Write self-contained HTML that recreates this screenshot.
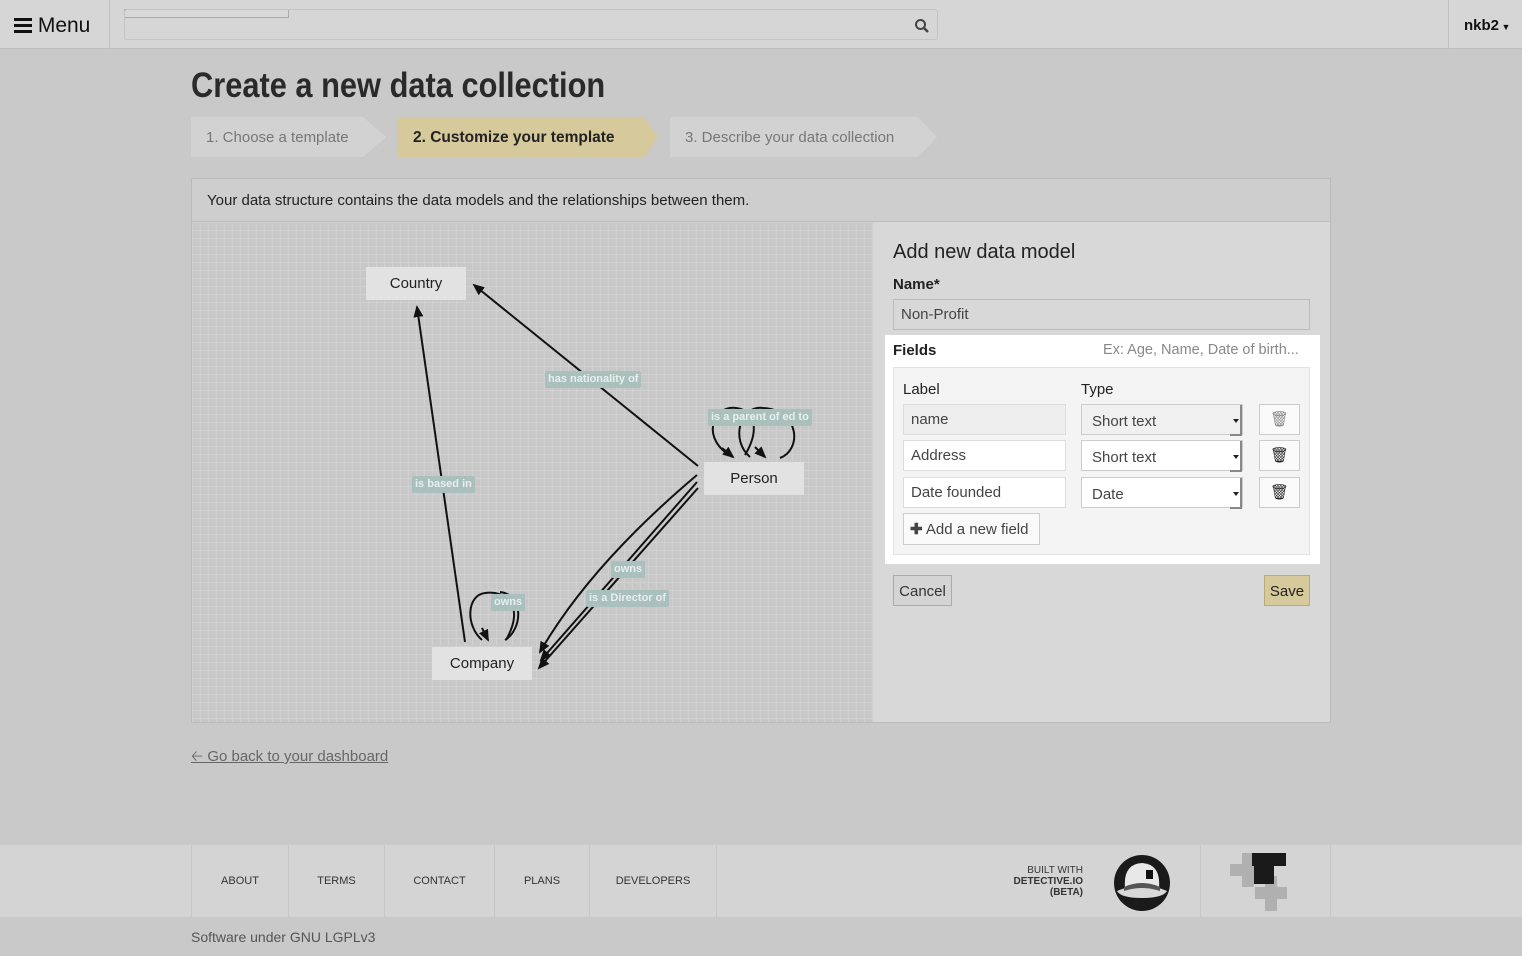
<!DOCTYPE html>
<html><head><meta charset="utf-8"><style>
*{box-sizing:border-box;margin:0;padding:0}
body{width:1522px;height:956px;background:#c9c9c9;font-family:"Liberation Sans",sans-serif;color:#222;position:relative;overflow:hidden;font-size:15px}
.abs{position:absolute}
.hdr{left:0;top:0;width:1522px;height:49px;background:#d6d6d6;border-bottom:1px solid #bdbdbd}
.tab{height:40px;top:118px;line-height:40px;font-size:15px;padding-left:15px}
.inp{border:1px solid #bbb;background:#fff;height:31px;line-height:29px;padding-left:7px;font-size:15px;color:#444;position:absolute}
.sel{border:1px solid #ccc;background:#fff;height:31px;line-height:33px;padding-left:10px;font-size:15px;color:#444;position:absolute;width:162px}
.sel:after{content:"";position:absolute;right:0;top:0;width:10px;height:29px;border-right:2px solid #888;border-bottom:2px solid #888}
.sel i{position:absolute;right:3px;top:14px;border:3px solid transparent;border-top:4px solid #222}
.trash{position:absolute;width:41px;height:31px;border:1px solid #ccc;background:#fafafa;text-align:center;line-height:29px}
.node{background:#e2e2e2;font-size:15px;text-align:center;line-height:33px;height:33px;position:absolute}
.lbl{background:#a9c0bc;color:#e8efee;font-size:11px;font-weight:bold;padding:0 3px;height:17px;line-height:17px;position:absolute;border-radius:2px}
.fl{position:absolute;top:845px;height:72px;line-height:72px;font-size:11px;color:#333;text-align:center;border-right:1px solid #c6c6c6}
</style></head><body>
<div class="abs hdr"></div>
<div class="abs" style="left:109px;top:0;width:1px;height:49px;background:#c2c2c2"></div>
<div class="abs" style="left:14px;top:14px;font-size:21px;color:#111"><svg width="18" height="16" style="vertical-align:-1px"><rect y="1" width="18" height="3" fill="#111"/><rect y="7" width="18" height="3" fill="#111"/><rect y="13" width="18" height="3" fill="#111"/></svg> Menu</div>
<div class="abs" style="left:124px;top:9px;width:165px;height:9px;border:1px solid #aaa;background:#d8d8d8"></div>
<div class="abs" style="left:124px;top:9px;width:814px;height:31px;border:1px solid #c4c4c4;border-radius:3px"></div>
<svg class="abs" style="left:914px;top:18px" width="16" height="16" viewBox="0 0 16 16"><circle cx="6.5" cy="6.5" r="4.5" fill="none" stroke="#444" stroke-width="2"/><path d="M10 10l4 4" stroke="#444" stroke-width="2.5"/></svg>
<div class="abs" style="left:1448px;top:0;width:1px;height:49px;background:#c2c2c2"></div>
<div class="abs" style="left:1464px;top:17px;font-weight:bold;font-size:15px;color:#111">nkb2<span style="font-size:9px"> ▼</span></div>

<div class="abs" style="left:191px;top:66px;font-size:35px;font-weight:bold;color:#2a2a2a;transform:scaleX(0.88);transform-origin:0 0;white-space:nowrap">Create a new data collection</div>

<svg class="abs" style="left:191px;top:117px" width="750" height="40">
<polygon points="0,0 172,0 195,20 172,40 0,40" fill="#d2d2d2"/>
<polygon points="207,0 453,0 467,20 453,40 207,40" fill="#d6c99b"/>
<polygon points="479,0 727,0 746,20 727,40 479,40" fill="#d2d2d2"/>
</svg>
<div class="abs tab" style="left:191px;color:#777">1. Choose a template</div>
<div class="abs tab" style="left:398px;font-weight:bold;color:#222;font-size:15.5px">2. Customize your template</div>
<div class="abs tab" style="left:670px;color:#777">3. Describe your data collection</div>

<div class="abs" style="left:191px;top:178px;width:1140px;height:545px;border:1px solid #bbb;background:#cecece"></div>
<div class="abs" style="left:207px;top:192px;font-size:15px;color:#222">Your data structure contains the data models and the relationships between them.</div>
<div class="abs" style="left:192px;top:221px;width:1138px;height:1px;background:#bdbdbd"></div>
<div class="abs" style="left:192px;top:222px;width:681px;height:500px;background-color:#c8c8c8;background-image:linear-gradient(#d0d0d0 1px,transparent 1px),linear-gradient(90deg,#d0d0d0 1px,transparent 1px);background-size:8px 8px"></div>
<div class="abs" style="left:873px;top:222px;width:457px;height:500px;background:#d8d8d8"></div>

<svg class="abs" style="left:192px;top:222px" width="681" height="500" viewBox="192 222 681 500">
<defs><marker id="a" markerWidth="12" markerHeight="10" refX="10" refY="5" orient="auto" markerUnits="userSpaceOnUse"><path d="M0,0L12,5L0,10z" fill="#111"/></marker></defs>
<g stroke="#111" stroke-width="2" fill="none">
<path d="M465 642 L417 307" marker-end="url(#a)"/>
<path d="M698 466 L474 285" marker-end="url(#a)"/>
<path d="M697 475 C620 540 570 600 540 652" marker-end="url(#a)"/>
<path d="M697 482 L541 660" marker-end="url(#a)"/>
<path d="M698 488 L539 668" marker-end="url(#a)"/>
<path d="M482 640 C465 625 467 595 485 593 C505 590 526 605 506 640"/>
<path d="M482 628 L488 640" marker-end="url(#a)"/>
<path d="M505 640 C522 630 525 595 500 592"/>
<path d="M733 457 C700 440 712 405 736 408 C755 410 760 430 745 455"/>
<path d="M722 448 L733 457" marker-end="url(#a)"/>
<path d="M750 457 C730 440 740 405 763 408 C800 410 802 450 780 458"/>
<path d="M755 447 L765 457" marker-end="url(#a)"/>
</g>
</svg>
<div class="node" style="left:366px;top:267px;width:100px">Country</div>
<div class="node" style="left:704px;top:462px;width:100px">Person</div>
<div class="node" style="left:432px;top:647px;width:100px">Company</div>
<div class="lbl" style="left:545px;top:371px">has nationality of</div>
<div class="lbl" style="left:708px;top:409px">is a parent of ed to</div>
<div class="lbl" style="left:412px;top:476px">is based in</div>
<div class="lbl" style="left:611px;top:561px">owns</div>
<div class="lbl" style="left:491px;top:594px">owns</div>
<div class="lbl" style="left:586px;top:590px">is a Director of</div>

<div class="abs" style="left:893px;top:241px;font-size:20px;color:#222">Add new data model</div>
<div class="abs" style="left:893px;top:276px;font-size:15px;font-weight:bold;color:#222">Name*</div>
<div class="inp" style="left:893px;top:299px;width:417px;background:#d8d8d8;border-color:#bbb">Non-Profit</div>

<div class="abs" style="left:885px;top:335px;width:435px;height:229px;background:#fff"></div>
<div class="abs" style="left:893px;top:342px;font-weight:bold;font-size:15px">Fields</div>
<div class="abs" style="left:1103px;top:342px;font-size:14.5px;color:#888">Ex: Age, Name, Date of birth...</div>
<div class="abs" style="left:893px;top:367px;width:417px;height:188px;background:#f4f4f4;border:1px solid #e2e2e2"></div>
<div class="abs" style="left:903px;top:381px;font-size:15px">Label</div>
<div class="abs" style="left:1081px;top:381px;font-size:15px">Type</div>
<div class="inp" style="left:903px;top:404px;width:163px;background:#eee;border-color:#ddd">name</div>
<div class="inp" style="left:903px;top:440px;width:163px;border-color:#ddd">Address</div>
<div class="inp" style="left:903px;top:477px;width:163px;border-color:#ddd">Date founded</div>
<div class="sel" style="left:1081px;top:404px;background:#f0f0f0">Short text<i></i></div>
<div class="sel" style="left:1081px;top:440px">Short text<i></i></div>
<div class="sel" style="left:1081px;top:477px">Date<i></i></div>
<div class="trash" style="left:1259px;top:404px;color:#888">&#128465;</div>
<div class="trash" style="left:1259px;top:440px;color:#222">&#128465;</div>
<div class="trash" style="left:1259px;top:477px;color:#222">&#128465;</div>
<div class="abs" style="left:903px;top:513px;width:137px;height:32px;border:1px solid #ccc;background:#fafafa;line-height:32px;padding-left:6px;font-size:15px;color:#444"><b style="color:#444">✚</b> Add a new field</div>

<div class="abs" style="left:893px;top:575px;width:59px;height:31px;border:1px solid #aaa;background:#d4d4d4;line-height:31px;text-align:center;font-size:15px;color:#333">Cancel</div>
<div class="abs" style="left:1264px;top:575px;width:46px;height:31px;border:1px solid #b8ab7a;background:#d6c99b;line-height:31px;text-align:center;font-size:15px;color:#222">Save</div>

<div class="abs" style="left:191px;top:746px;font-size:15px;color:#666;text-decoration:underline">&#129120; Go back to your dashboard</div>

<div class="abs" style="left:0;top:845px;width:1522px;height:72px;background:#d4d4d4"></div>
<div class="abs" style="left:191px;top:845px;width:1px;height:72px;background:#c6c6c6"></div>
<div class="fl" style="left:192px;width:97px">ABOUT</div>
<div class="fl" style="left:289px;width:96px">TERMS</div>
<div class="fl" style="left:385px;width:110px">CONTACT</div>
<div class="fl" style="left:495px;width:95px">PLANS</div>
<div class="fl" style="left:590px;width:127px">DEVELOPERS</div>
<div class="abs" style="left:990px;top:865px;width:93px;text-align:right;font-size:10px;line-height:11px;color:#333">BUILT WITH<br><b>DETECTIVE.IO<br>(BETA)</b></div>
<svg class="abs" style="left:1113px;top:854px" width="58" height="58" viewBox="0 0 58 58"><circle cx="29" cy="29" r="28" fill="#1a1a1a"/><path d="M12 34 Q10 10 29 9 Q48 10 46 34z" fill="#e8e8e8"/><path d="M4 37 Q29 26 54 37 Q50 44 29 44 Q8 44 4 37z" fill="#d8d8d8"/><path d="M11 33 Q29 25 47 33 L47 37 Q29 31 11 37z" fill="#555"/><rect x="33" y="16" width="7" height="9" fill="#111"/></svg>
<div class="abs" style="left:1200px;top:845px;width:1px;height:72px;background:#c6c6c6"></div>
<div class="abs" style="left:1330px;top:845px;width:1px;height:72px;background:#c6c6c6"></div>
<svg class="abs" style="left:1230px;top:853px" width="72" height="60">
<path d="M12 0h12v11h8v12h-8v11h-12v-11h-12v-12h12z" fill="#b0b0b0"/>
<path d="M35 23h12v11h10v12h-10v12h-12v-12h-10v-12h10z" fill="#b0b0b0"/>
<path d="M22 0h34v13h-12v18h-20v-18h-2z" fill="#1a1a1a"/></svg>
<div class="abs" style="left:191px;top:929px;font-size:14px;color:#555">Software under GNU LGPLv3</div>
</body></html>
